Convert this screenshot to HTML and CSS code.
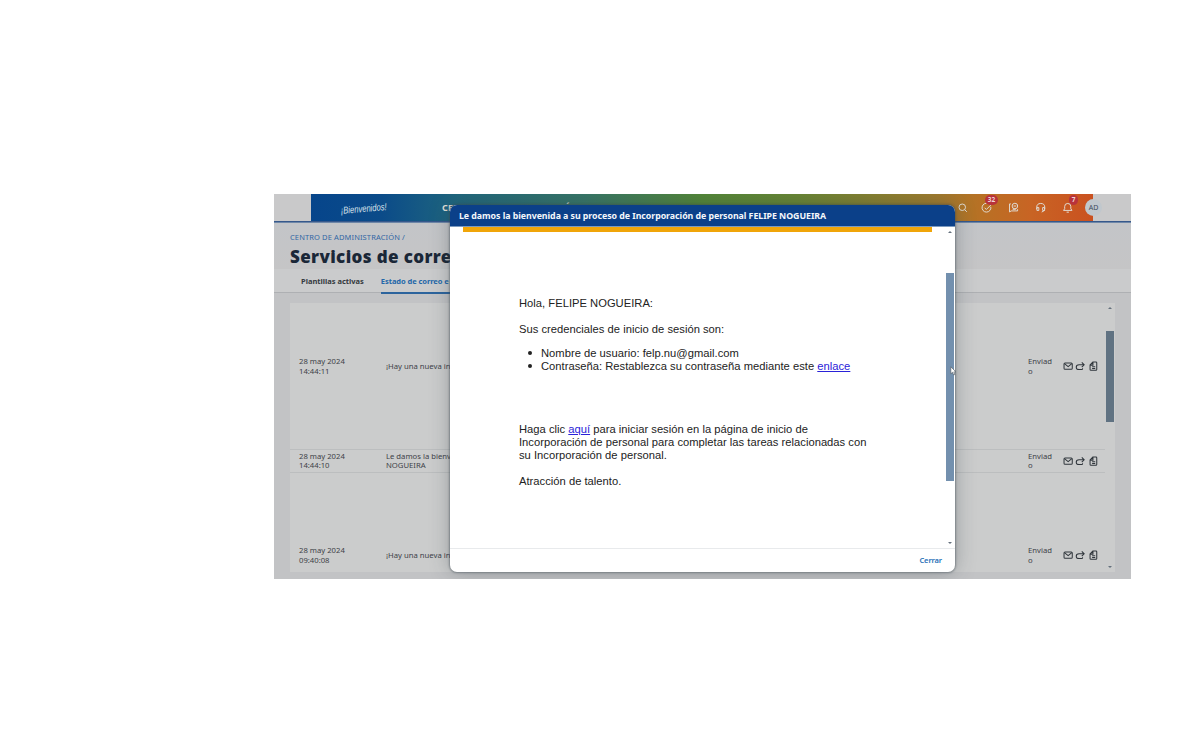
FILE: index.html
```html
<!DOCTYPE html>
<html lang="es">
<head>
<meta charset="utf-8">
<title>Servicios de correo</title>
<link rel="stylesheet" href="styles.css">
</head>
<body>
<svg class="defs" width="0" height="0">
  <defs>
    <symbol id="mail" viewBox="0 0 10 10"><rect x="1" y="2" width="8" height="6" rx="1"/><path d="M1.4 2.6 5 5.400l3.600-2.800"/></symbol>
    <symbol id="forward" viewBox="0 0 10 10"><path d="M8.800 3.700H4Q1.200 3.700 1.200 6T4 8.300h2.600Q7.400 8.300 7.400 7M6.600 1.300l2.300 2.400-2.300 2.300"/></symbol>
    <symbol id="doc" viewBox="0 0 10 10"><path d="M4.700 1H7.700q.8 0 .8.800v6.400q0 .8-.8.8H2.800q-.8 0-.8-.8V3.900zM4.800 1v3H2.200M4 5.600h3M4 7.300h3"/></symbol>
  </defs>
</svg>
<div class="app">
  <header class="shell">
    <div class="brand">
      <svg class="welcome" viewBox="0 0 50 20"><text x="1" y="16" textLength="46" lengthAdjust="spacingAndGlyphs" transform="rotate(-5 1 16)">¡Bienvenidos!</text></svg>
      <span class="area">CENTRO DE ADMINISTRACIÓN</span>
      <nav class="tools">
        <svg viewBox="0 0 12 12"><circle cx="5.500" cy="5.500" r="3.400"/><path d="m8 8 2.300 2.300"/></svg>
        <span class="tool"><svg viewBox="0 0 12 12"><path d="M10.200 5A4.600 4.600 0 1 1 7.500 1.700M3.800 6l1.800 1.800L10.400 3"/></svg><b class="badge">32</b></span>
        <svg viewBox="0 0 12 12"><path d="M3 2H1.600v8.400L3.300 9.300H10V7.500"/><circle cx="7.200" cy="4.200" r="2.900"/><path d="M5.800 4.200h2.800M4.800 7.600h3.400"/></svg>
        <svg viewBox="0 0 12 12"><path d="M1.800 7.500V5.700a4.200 4.200 0 0 1 8.400 0v1.800M2 5.800h2v3H2zM8 5.800h2v3H8zM10 8.800 7 10.500"/></svg>
        <span class="tool"><svg viewBox="0 0 12 12"><path d="M1.600 8.800h8.800L9.200 7V4.700a3.200 3.200 0 0 0-6.400 0V7zM4.800 10.600h2.400"/></svg><b class="badge one">7</b></span>
      </nav>
    </div>
    <span class="avatar">AD</span>
  </header>
  <section class="heading">
    <div class="crumb">CENTRO DE ADMINISTRACIÓN /</div>
    <h1>Servicios de corre</h1>
  </section>
  <nav class="tabs">
    <span class="tab">Plantillas activas</span>
    <span class="tab active">Estado de correo e</span>
  </nav>
  <main class="content">
    <div class="panel">
      <div class="rows">
        <div class="row first">
          <div>28 may 2024<br>14:44:11</div><div>¡Hay una nueva inc</div><div>Enviad<br>o</div>
          <div class="actions"><svg><use href="#mail"/></svg><svg><use href="#forward"/></svg><svg><use href="#doc"/></svg></div>
        </div>
        <div class="row second">
          <div>28 may 2024<br>14:44:10</div><div>Le damos la bienve<br>NOGUEIRA</div><div>Enviad<br>o</div>
          <div class="actions"><svg><use href="#mail"/></svg><svg><use href="#forward"/></svg><svg><use href="#doc"/></svg></div>
        </div>
        <div class="row third">
          <div>28 may 2024<br>09:40:08</div><div>¡Hay una nueva inc</div><div>Enviad<br>o</div>
          <div class="actions"><svg><use href="#mail"/></svg><svg><use href="#forward"/></svg><svg><use href="#doc"/></svg></div>
        </div>
      </div>
      <div class="scroll"><i class="up"></i><i class="thumb"></i><i class="down"></i></div>
    </div>
    <div class="cutoff"></div>
  </main>
  <div class="dialog">
    <div class="dialog-title"><span>Le damos la bienvenida a su proceso de Incorporación de personal FELIPE NOGUEIRA</span></div>
    <div class="dialog-body">
      <div class="mail">
        <div class="stripe"></div>
        <div class="message">
          <p>Hola, FELIPE NOGUEIRA:</p>
          <p>Sus credenciales de inicio de sesión son:</p>
          <ul>
            <li>Nombre de usuario: felp.nu@gmail.com</li>
            <li>Contraseña: Restablezca su contraseña mediante este <a>enlace</a></li>
          </ul>
          <p class="access">Haga clic <a>aquí</a> para iniciar sesión en la página de inicio de<br>Incorporación de personal para completar las tareas relacionadas con<br>su Incorporación de personal.</p>
          <p>Atracción de talento.</p>
        </div>
      </div>
      <div class="scroll"><i class="up"></i><i class="thumb"></i><i class="down"></i></div>
    </div>
    <div class="dialog-foot"><span>Cerrar</span></div>
  </div>
  <svg class="cursor" viewBox="0 0 7 10"><path d="M.8.8v7l1.700-1.500 1.200 2.700 1.300-.6-1.200-2.500h2.200z"/></svg>
</div>
</body>
</html>
```
FILE: styles.css
```css
* { box-sizing: border-box; }
body { margin: 0; background: #fff; padding: 194px 0 0 274px; font-family: "Noto Sans", sans-serif; }
.defs { display: block; }
.app { position: relative; width: 857px; height: 385px; background: #c2c3c5; display: flex; flex-direction: column; overflow: hidden; }
svg { fill: none; stroke: currentColor; }

.shell { height: 28px; flex: none; display: flex; align-items: center; padding-left: 37px; background: #c9c9ca; border-bottom: 1px solid #36588b; }
.brand { width: 782px; height: 27px; display: flex; align-items: center; color: #e1dfd8; background: linear-gradient(90deg, #06458b 0, #0b4b89 9%, #20677d 19%, #377667 35%, #538738 50%, #688634 62%, #a07b2d 80%, #b97024 86%, #c86424 92%, #ca5120 100%); }
.welcome { width: 50px; height: 20px; margin-left: 29px; overflow: visible; stroke: none; fill: #d9e2ea; font: italic 10px "Liberation Sans", sans-serif; }
.area { margin-left: 52px; font-size: 9px; font-weight: 700; letter-spacing: .1px; width: 514px; flex: none; white-space: nowrap; }
.tools { display: flex; align-items: center; gap: 15.500px; margin-left: 1px; }
.tools svg { display: block; width: 11.500px; height: 11.500px; flex: none; }
.tools > svg:first-child { margin-right: -3px; }
.tool { position: relative; }
.badge { position: absolute; left: 4px; top: -7px; min-width: 13px; height: 10px; border-radius: 5px; background: #b8333b; color: #f0d5d5; font-size: 6.500px; line-height: 10px; text-align: center; }
.badge.one { min-width: 9px; left: 7px; }
.avatar { width: 17px; height: 17px; margin-left: -8px; border-radius: 50%; background: #c0c7cd; color: #3e4b5c; font-size: 7px; line-height: 17px; text-align: center; }

.heading { height: 47px; flex: none; padding: 9px 16px 0; background: linear-gradient(#c3c5c8, #c5c5c6); border-top: 1px solid #6e87a8; }
.crumb { font-size: 7.500px; line-height: 11px; color: #3266a4; white-space: nowrap; letter-spacing: .12px; }
h1 { margin: 0; font-size: 17px; line-height: 27px; font-weight: 900; letter-spacing: .38px; color: #1a2737; white-space: nowrap; }
.tabs { height: 24px; flex: none; display: flex; padding-left: 27px; gap: 17px; background: #cacbcc; border-bottom: 1px solid #aeb0b3; }
.tab { font-size: 7.500px; line-height: 24px; font-weight: 700; color: #353a40; white-space: nowrap; }
.tab.active { color: #2367a9; border-bottom: 2px solid #2c649d; height: 25px; width: 80px; letter-spacing: -.06px; }

.content { flex: 1; padding: 10px 16px 0; }
.panel { height: 269px; display: flex; background: #cbcccc; color: #3e4248; font-size: 7.700px; line-height: 9.300px; }
.rows { flex: 1; }
.row { display: grid; grid-template-columns: 87px 642px 36px 1fr; align-items: center; padding-left: 9px; white-space: nowrap; }
.first { height: 147px; padding-bottom: 19px; border-bottom: 1px solid #bcbebf; }
.second { height: 23px; border-bottom: 1px solid #bcbebf; }
.third { height: 99px; padding-top: 66px; }
.actions { display: flex; gap: 2px; color: #30363c; margin-left: -1px; }
.actions svg { width: 10.300px; height: 10.300px; }
.scroll { width: 9px; margin-right: 1px; display: flex; flex-direction: column; align-items: center; }
.scroll i { display: block; }
.up { border: 2px solid transparent; border-top: 0; border-bottom: 2px solid #65707d; margin-top: 4px; }
.down { border: 2px solid transparent; border-bottom: 0; border-top: 2px solid #65707d; margin: auto 0 4px; }
.panel .thumb { width: 8px; height: 91px; margin-top: 22px; background: #607282; }
.cutoff { width: 38px; margin: -1px 0 0 565px; border-top: 1px dashed #7e8387; }

.dialog { position: absolute; left: 176px; top: 11px; width: 505px; height: 367px; display: flex; flex-direction: column; border-radius: 7px; overflow: hidden; background: #fff; }
.app .dialog { box-shadow: 0 0 2px 1px rgba(60,70,80,.45), 0 0 20px rgba(50,60,70,.35); }
.dialog-title { height: 22px; flex: none; padding-left: 9px; background: #0b4089; border-bottom: 1px solid #7b9ac0; color: #f4f7fb; font-size: 8.800px; line-height: 22px; font-weight: 700; letter-spacing: -.045px; white-space: nowrap; }
.dialog-body { flex: 1; display: flex; }
.mail { width: 495px; }
.stripe { width: 469px; height: 5px; margin: 0 0 0 13px; background: #f0a509; }
.message { margin: 65px 0 0 69px; font: 11.200px/13px "Liberation Sans", Arial, sans-serif; letter-spacing: .015px; color: #222; white-space: nowrap; }
.message p { margin: 0 0 13px; }
.message ul { margin: -2px 0 0; padding: 0 0 0 22px; list-style: none; }
.message li { display: flex; gap: .27em; }
.message li::before { content: ""; width: 4px; height: 4px; margin: 5px 6px 0 -13px; border-radius: 50%; background: #222; }
.message li { display: block; }
.message li::before { display: inline-block; vertical-align: 2px; margin: 0 9px 0 -13px; }
.message .access { margin-top: 50px; }
.message a { color: #2a22d8; text-decoration: underline; }
.dialog-body .thumb { width: 8px; height: 208px; margin-top: 40px; background: #7390ae; }
.dialog-foot { height: 24px; flex: none; border-top: 1px solid #e8eaec; padding-right: 13px; text-align: right; color: #2871b8; font-size: 7.500px; line-height: 23px; font-weight: 600; letter-spacing: -.1px; }
.cursor { position: absolute; left: 676px; top: 172px; width: 7px; height: 10px; fill: #fff; stroke: #59636c; stroke-width: .7; }
```
